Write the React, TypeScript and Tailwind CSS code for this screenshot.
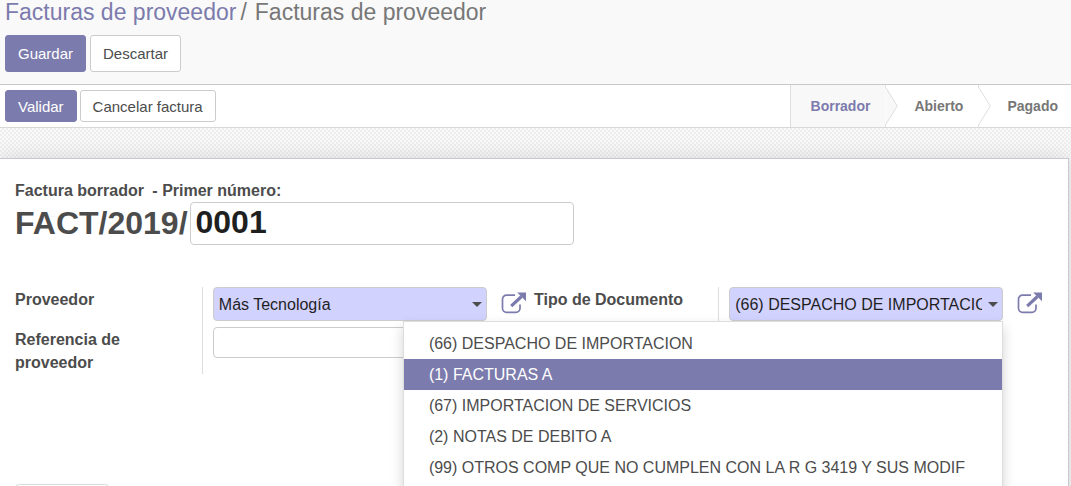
import { useState } from "react";
import type { ReactNode } from "react";

const documentTypes = [
  "(66) DESPACHO DE IMPORTACION",
  "(1) FACTURAS A",
  "(67) IMPORTACION DE SERVICIOS",
  "(2) NOTAS DE DEBITO A",
  "(99) OTROS COMP QUE NO CUMPLEN CON LA R G 3419 Y SUS MODIF",
];

function PrimaryButton({ children, size }: { children: ReactNode; size: "sm" | "md" }) {
  return (
    <button
      type="button"
      className={`rounded-[3px] border border-[#7c7bad] bg-[#7c7bad] px-3 text-[15px] text-white ${size === "md" ? "h-[37px]" : "h-8"}`}
    >
      {children}
    </button>
  );
}

function DefaultButton({ children, size }: { children: ReactNode; size: "sm" | "md" }) {
  return (
    <button
      type="button"
      className={`rounded-[3px] border border-[#cccccc] bg-white px-3 text-[15px] text-[#4c4c4c] ${size === "md" ? "h-[37px]" : "h-8"}`}
    >
      {children}
    </button>
  );
}

function ExternalLinkButton({ label }: { label: string }) {
  return (
    <button type="button" aria-label={label} className="mt-[5px] ml-[14px] h-6 w-[26px] shrink-0 text-[#7c7bad]">
      <svg viewBox="0 0 26 24" className="block h-6 w-[26px]" fill="none" stroke="currentColor">
        <path d="M14 3.2H5.5A4 4 0 0 0 1.5 7.200V16.300A4 4 0 0 0 5.500 20.300H15A4 4 0 0 0 19 16.300V12.500" strokeWidth="1.7" />
        <path d="M10.200 14.200L20.500 4.500" strokeWidth="3.200" />
        <path d="M16.200 0.500H25V9.300Z" fill="currentColor" stroke="none" />
      </svg>
    </button>
  );
}

function RelationField({
  id,
  value,
  expanded,
  onToggle,
  children,
}: {
  id: string;
  value: string;
  expanded: boolean;
  onToggle?: () => void;
  children?: ReactNode;
}) {
  return (
    <div className="relative min-w-0 flex-1">
      <div className="flex h-[34px] items-center rounded-[4px] border border-[#cccccc] bg-[#d2d2ff]">
        <input
          id={id}
          role="combobox"
          aria-expanded={expanded}
          defaultValue={value}
          className="ml-[5px] h-full min-w-0 flex-1 bg-transparent pt-0.5 text-[16px] text-[#1f1f1f] outline-none"
        />
        <button type="button" aria-label="Desplegar" onClick={onToggle} className="flex h-full w-5 items-center justify-center pl-0.5">
          <svg viewBox="0 0 10 5" className="h-[5px] w-[10px]" fill="#4c4c4c">
            <path d="M0 0H10L5 5Z" />
          </svg>
        </button>
      </div>
      {children}
    </div>
  );
}

function StatusArrow({ fill }: { fill: string }) {
  return (
    <svg viewBox="0 0 13 42" preserveAspectRatio="none" className="h-full w-[13px] shrink-0" fill={fill} stroke="#dedede">
      <path d="M0.500 -1V2L12.300 21L0.500 40V43" />
    </svg>
  );
}

export default function App() {
  const [open, setOpen] = useState(true);
  const [active, setActive] = useState(1);

  return (
    <div className="flex h-screen flex-col overflow-hidden bg-white font-['Liberation_Sans',Arial,sans-serif] text-[16px] leading-[23px] text-[#4c4c4c]">
      <header className="border-b border-[#c8c8c8] bg-[#f9f9f9] px-[5px] pb-3">
        <nav aria-label="Ruta" className="flex h-[35px] gap-1 text-[23px] leading-6 text-[#777777]">
          <a href="#facturas" className="text-[#7c7bad]">
            Facturas de proveedor
          </a>
          <span>/</span>
          <span className="ml-1">Facturas de proveedor</span>
        </nav>
        <div className="flex gap-1">
          <PrimaryButton size="md">Guardar</PrimaryButton>
          <DefaultButton size="md">Descartar</DefaultButton>
        </div>
      </header>

      <div className="flex h-[43px] shrink-0 items-stretch justify-between border-b border-[#d8d8d8] pl-[5px]">
        <div className="flex items-center gap-[3px]">
          <PrimaryButton size="sm">Validar</PrimaryButton>
          <DefaultButton size="sm">Cancelar factura</DefaultButton>
        </div>
        <ol className="flex items-stretch text-[14px] font-bold text-[#777777]">
          <li className="flex">
            <span className="flex items-center border-l border-[#dedede] bg-[#f8f8f8] pr-[15px] pl-5 text-[#7c7bad]" aria-current="step">
              Borrador
            </span>
            <StatusArrow fill="#f8f8f8" />
          </li>
          <li className="flex">
            <span className="flex items-center pr-[15px] pl-4">Abierto</span>
            <StatusArrow fill="#ffffff" />
          </li>
          <li className="flex items-center pr-[13px] pl-4">Pagado</li>
        </ol>
      </div>

      <main className="flex min-h-0 flex-1 flex-col bg-[#f6f6f6] bg-[conic-gradient(#eeeeee_25%,#f9f9f9_0_50%,#eeeeee_0_75%,#f9f9f9_0)] bg-size-[4px_4px] pt-[30px] pr-[2px]">
        <section className="flex-1 border-t border-r border-[#c8c8d3] bg-white px-[15px] pt-5 shadow-[0_0_20px_rgba(0,0,0,0.12)]">
          <label htmlFor="number" className="block font-bold">
            <span className="mr-1">Factura borrador</span> - Primer número:
          </label>
          <div className="flex items-start gap-0.5 text-[32px] font-bold">
            <span className="leading-[42px]">FACT/2019/</span>
            <input
              id="number"
              defaultValue="0001"
              className="h-[43px] w-96 rounded-[4px] border border-[#cccccc] bg-white pr-[6px] pb-0.5 pl-[5px] text-[#1f1f1f] outline-none"
            />
          </div>

          <div className="mt-[42px] grid grid-cols-2 items-start">
            <div className="grid grid-cols-[36%_1fr]">
              <label htmlFor="supplier" className="pt-px font-bold">
                Proveedor
              </label>
              <div className="flex border-l border-[#dddddd] pr-[7px] pb-[6px] pl-[10px]">
                <RelationField id="supplier" value="Más Tecnología" expanded={false} />
                <ExternalLinkButton label="Abrir proveedor" />
              </div>
              <label htmlFor="reference" className="pt-px pr-16 font-bold">
                Referencia de proveedor
              </label>
              <div className="border-l border-[#dddddd] pl-[10px]">
                <input
                  id="reference"
                  className="block h-[31px] w-full rounded-[4px] border border-[#cccccc] bg-white px-[5px] text-[16px] outline-none"
                />
              </div>
            </div>

            <div className="grid grid-cols-[35.5%_1fr]">
              <label htmlFor="document" className="pt-px font-bold">
                Tipo de Documento
              </label>
              <div className="flex border-l border-[#dddddd] pr-[10px] pl-[10px]">
                <RelationField
                  id="document"
                  value="(66) DESPACHO DE IMPORTACION"
                  expanded={open}
                  onToggle={() => setOpen(!open)}
                >
                  {open && (
                    <ul
                      role="listbox"
                      aria-label="Tipo de Documento"
                      className="absolute top-full right-0 z-10 w-max border border-[#dddddd] bg-white py-[6px] shadow-[0_6px_12px_rgba(0,0,0,0.175)]"
                    >
                      {documentTypes.map((name, index) => (
                        <li
                          key={name}
                          role="option"
                          aria-selected={index === active}
                          onMouseEnter={() => setActive(index)}
                          className={`py-1 pr-[37px] pl-[25px] whitespace-nowrap ${index === active ? "bg-[#7c7bad] text-white" : "text-[#4c4c4c]"}`}
                        >
                          {name}
                        </li>
                      ))}
                    </ul>
                  )}
                </RelationField>
                <ExternalLinkButton label="Abrir tipo de documento" />
              </div>
            </div>
          </div>

          <div role="tablist" className="mt-[110px]">
            <button
              type="button"
              role="tab"
              aria-selected="true"
              aria-label="Factura"
              className="block h-10 w-[94px] rounded-t-[4px] border border-b-0 border-[#dddddd] bg-white"
            />
          </div>
        </section>
      </main>
    </div>
  );
}
